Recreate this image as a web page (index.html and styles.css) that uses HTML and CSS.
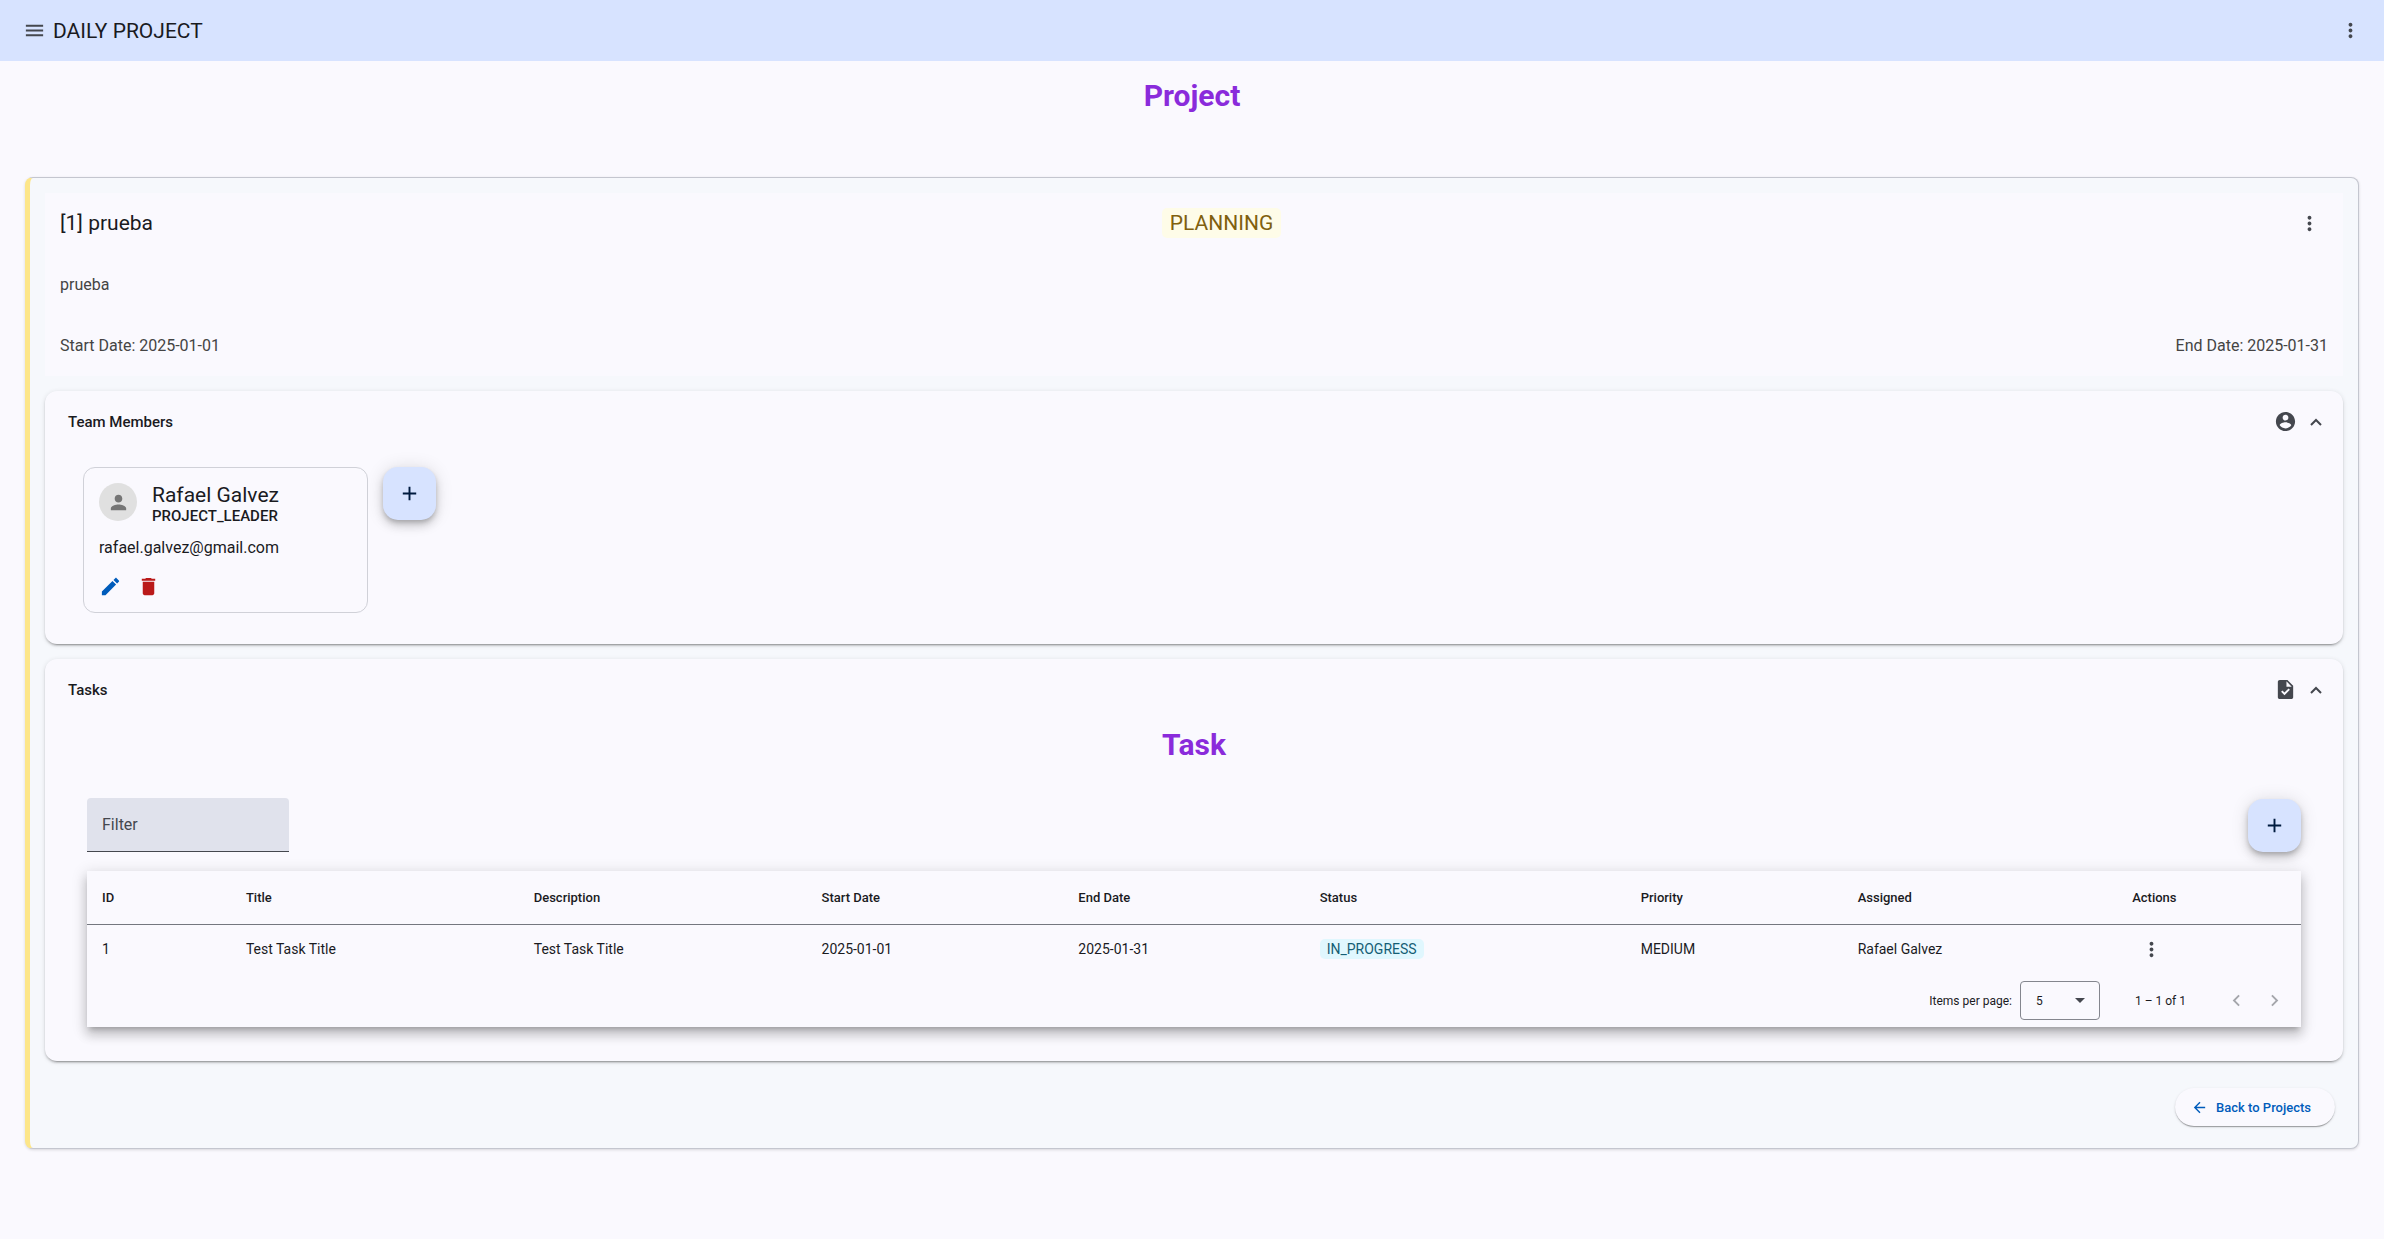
FILE: index.html
```html
<!DOCTYPE html>
<html lang="en">
<head>
<meta charset="utf-8">
<meta name="viewport" content="width=device-width, initial-scale=1">
<title>Daily Project</title>
<link rel="stylesheet" href="styles.css">
</head>
<body>
<header class="toolbar">
  <button class="icon-btn" type="button" aria-label="Menu"><svg class="icon" viewBox="0 0 24 24"><path d="M3 18h18v-2H3v2zm0-5h18v-2H3v2zm0-7v2h18V6H3z"/></svg></button>
  <span class="brand">DAILY PROJECT</span>
  <button class="icon-btn toolbar-more" type="button" aria-label="More options"><svg class="icon" viewBox="0 0 24 24"><path d="M12 8c1.100 0 2-.9 2-2s-.9-2-2-2-2 .9-2 2 .9 2 2 2zm0 2c-1.100 0-2 .9-2 2s.9 2 2 2 2-.9 2-2-.9-2-2-2zm0 6c-1.100 0-2 .9-2 2s.9 2 2 2 2-.9 2-2-.9-2-2-2z"/></svg></button>
</header>
<main class="page">
  <h1 class="heading">Project</h1>
  <article class="project">
    <header class="summary">
      <div class="summary-row">
        <h2 class="project-title">[1] prueba</h2>
        <span class="badge badge-planning">PLANNING</span>
        <button class="icon-btn" type="button" aria-label="Project options"><svg class="icon" viewBox="0 0 24 24"><path d="M12 8c1.100 0 2-.9 2-2s-.9-2-2-2-2 .9-2 2 .9 2 2 2zm0 2c-1.100 0-2 .9-2 2s.9 2 2 2 2-.9 2-2-.9-2-2-2zm0 6c-1.100 0-2 .9-2 2s.9 2 2 2 2-.9 2-2-.9-2-2-2z"/></svg></button>
      </div>
      <p class="description">prueba</p>
      <div class="dates"><span>Start Date: 2025-01-01</span><span>End Date: 2025-01-31</span></div>
    </header>

    <section class="panel">
      <button class="panel-header" type="button" aria-expanded="true">
        <span class="panel-title">Team Members</span>
        <svg class="icon" viewBox="0 0 24 24"><path d="M12 2C6.480 2 2 6.480 2 12s4.480 10 10 10 10-4.480 10-10S17.520 2 12 2zm0 3c1.660 0 3 1.340 3 3s-1.340 3-3 3-3-1.340-3-3 1.340-3 3-3zm0 14.200c-2.500 0-4.710-1.280-6-3.220.03-1.990 4-3.080 6-3.080 1.990 0 5.970 1.090 6 3.080-1.290 1.940-3.500 3.220-6 3.220z"/></svg>
        <svg class="chevron" viewBox="0 0 12 12"><path d="M1 9l5-5 5 5"/></svg>
      </button>
      <div class="team">
        <article class="member">
          <div class="member-head">
            <span class="avatar"><svg class="icon" viewBox="0 0 24 24"><path d="M12 12c2.210 0 4-1.790 4-4s-1.790-4-4-4-4 1.790-4 4 1.790 4 4 4zm0 2c-2.670 0-8 1.340-8 4v2h16v-2c0-2.660-5.330-4-8-4z"/></svg></span>
            <div>
              <h3 class="member-name">Rafael Galvez</h3>
              <p class="member-role">PROJECT_LEADER</p>
            </div>
          </div>
          <p class="member-mail">rafael.galvez@gmail.com</p>
          <div class="member-actions">
            <button class="icon-btn edit" type="button" aria-label="Edit member"><svg class="icon" viewBox="0 0 24 24"><path d="M3 17.250V21h3.750L17.810 9.940l-3.750-3.750L3 17.250zM20.710 7.040c.39-.39.39-1.020 0-1.410l-2.340-2.340c-.39-.39-1.020-.39-1.410 0l-1.830 1.830 3.750 3.750 1.830-1.830z"/></svg></button>
            <button class="icon-btn delete" type="button" aria-label="Remove member"><svg class="icon" viewBox="0 0 24 24"><path d="M6 19c0 1.100.9 2 2 2h8c1.100 0 2-.9 2-2V7H6v12zM19 4h-3.500l-1-1h-5l-1 1H5v2h14V4z"/></svg></button>
          </div>
        </article>
        <button class="fab" type="button" aria-label="Add member"><svg class="icon" viewBox="0 0 24 24"><path d="M19 13h-6v6h-2v-6H5v-2h6V5h2v6h6v2z"/></svg></button>
      </div>
    </section>

    <section class="panel">
      <button class="panel-header" type="button" aria-expanded="true">
        <span class="panel-title">Tasks</span>
        <svg class="icon" viewBox="0 0 24 24"><path d="M14 2H6c-1.100 0-2 .9-2 2v16c0 1.100.89 2 1.990 2H18c1.100 0 2-.9 2-2V8l-6-6zm-3.060 16L7.400 14.460l1.410-1.410 2.120 2.120 4.240-4.240 1.410 1.410L10.940 18zM13 9V3.500L18.500 9H13z"/></svg>
        <svg class="chevron" viewBox="0 0 12 12"><path d="M1 9l5-5 5 5"/></svg>
      </button>
      <div class="tasks">
        <h2 class="heading">Task</h2>
        <div class="tasks-bar">
          <input class="filter" type="text" placeholder="Filter" aria-label="Filter">
          <button class="fab" type="button" aria-label="Add task"><svg class="icon" viewBox="0 0 24 24"><path d="M19 13h-6v6h-2v-6H5v-2h6V5h2v6h6v2z"/></svg></button>
        </div>
        <div class="sheet">
          <table class="task-table">
            <colgroup><col class="c-id"><col class="c-text"><col class="c-text"><col class="c-start"><col class="c-end"><col class="c-status"><col class="c-priority"><col class="c-assigned"><col></colgroup>
            <thead><tr><th>ID</th><th>Title</th><th>Description</th><th>Start Date</th><th>End Date</th><th>Status</th><th>Priority</th><th>Assigned</th><th>Actions</th></tr></thead>
            <tbody><tr><td>1</td><td>Test Task Title</td><td>Test Task Title</td><td>2025-01-01</td><td>2025-01-31</td><td><span class="badge badge-progress">IN_PROGRESS</span></td><td>MEDIUM</td><td>Rafael Galvez</td><td><button class="icon-btn" type="button" aria-label="Task options"><svg class="icon" viewBox="0 0 24 24"><path d="M12 8c1.100 0 2-.9 2-2s-.9-2-2-2-2 .9-2 2 .9 2 2 2zm0 2c-1.100 0-2 .9-2 2s.9 2 2 2 2-.9 2-2-.9-2-2-2zm0 6c-1.100 0-2 .9-2 2s.9 2 2 2 2-.9 2-2-.9-2-2-2z"/></svg></button></td></tr></tbody>
          </table>
          <div class="paginator">
            <label for="page-size">Items per page:</label>
            <span class="page-size">
              <select id="page-size"><option>5</option><option>10</option><option>25</option></select>
              <svg class="caret" viewBox="0 0 10 5"><path d="M0 0h10L5 5z"/></svg>
            </span>
            <span class="range">1 – 1 of 1</span>
            <button class="icon-btn" type="button" disabled aria-label="Previous page"><svg class="icon" viewBox="0 0 24 24"><path d="M15.410 7.410L14 6l-6 6 6 6 1.410-1.410L10.830 12z"/></svg></button>
            <button class="icon-btn" type="button" disabled aria-label="Next page"><svg class="icon" viewBox="0 0 24 24"><path d="M10 6L8.590 7.410 13.170 12l-4.580 4.590L10 18l6-6z"/></svg></button>
          </div>
        </div>
      </div>
    </section>

    <footer class="project-footer">
      <a class="back" href="#projects"><svg class="icon" viewBox="0 0 24 24"><path d="M20 11H7.830l5.590-5.590L12 4l-8 8 8 8 1.410-1.410L7.830 13H20v-2z"/></svg>Back to Projects</a>
    </footer>
  </article>
</main>
</body>
</html>
```
FILE: styles.css
```css
* { box-sizing: border-box; }

body {
  margin: 0;
  background: #faf9fe;
  color: #1a1b1f;
  font-family: Roboto, sans-serif;
  font-size: 13px;
}

h1, h2, h3, p { margin: 0; }

button, input, select { font: inherit; color: inherit; }

button { cursor: pointer; }

.icon {
  display: block;
  flex: none;
  width: 23px;
  height: 23px;
  fill: currentColor;
}

.icon-btn {
  display: flex;
  align-items: center;
  justify-content: center;
  width: 38px;
  height: 38px;
  padding: 0;
  border: 0;
  border-radius: 50%;
  background: none;
  color: #44474e;
}

/* Toolbar */
.toolbar {
  display: flex;
  align-items: center;
  height: 61px;
  padding: 0 15px;
  background: #d7e3ff;
}

.brand { font-size: 21px; line-height: 26px; }

.toolbar-more { margin-left: auto; }

/* Page */
.page { padding: 16px 25px 90px; }

.heading {
  color: #8a2bdb;
  font-size: 30px;
  font-weight: 700;
  line-height: 38px;
  text-align: center;
}

.project {
  margin-top: 62px;
  padding: 15px;
  border: 1px solid #c4c6cf;
  border-left: 5px solid #fde68a;
  border-radius: 8px;
  background: #f6f8fc;
  box-shadow: 0 1px 3px rgba(0, 0, 0, 0.14);
}

.summary {
  padding: 11px 15px 18px;
  background: #faf9fe;
  color: #444444;
  font-size: 16px;
  line-height: 24px;
}

.summary-row, .dates {
  display: flex;
  align-items: center;
  justify-content: space-between;
}

.project-title {
  color: #1a1b1f;
  font-size: 21px;
  font-weight: 400;
}

.description { margin: 31px 0 37px; }

.badge { display: inline-block; border-radius: 5px; }

.badge-planning {
  padding: 2px 8px;
  background: #fefce8;
  color: #80600f;
  font-size: 21px;
  line-height: 26px;
}

.badge-progress {
  padding: 0 7px;
  background: #e0f7fe;
  color: #155e75;
  line-height: 20px;
}

/* Expansion panels */
.panel {
  margin-top: 15px;
  border-radius: 12px;
  background: #faf9fe;
  box-shadow: 0 3px 1px -2px rgba(0, 0, 0, 0.2), 0 2px 2px rgba(0, 0, 0, 0.14), 0 1px 5px rgba(0, 0, 0, 0.12);
}

.panel-header {
  display: flex;
  align-items: center;
  width: 100%;
  height: 61px;
  padding: 0 21px 0 23px;
  border: 0;
  background: none;
  color: #44474e;
  text-align: left;
}

.panel-title {
  flex: 1;
  color: #1a1b1f;
  font-size: 15px;
  font-weight: 500;
}

.chevron {
  width: 12px;
  height: 12px;
  margin-left: 13px;
  fill: none;
  stroke: currentColor;
  stroke-width: 2;
}

/* Team */
.team {
  display: flex;
  align-items: flex-start;
  gap: 15px;
  padding: 15px 38px 31px;
}

.member {
  width: 285px;
  padding: 15px 15px 7px;
  border: 1px solid #d0d1d8;
  border-radius: 12px;
}

.member-head { display: flex; gap: 15px; }

.avatar {
  display: flex;
  align-items: center;
  justify-content: center;
  width: 38px;
  height: 38px;
  border-radius: 50%;
  background: #e0e0e0;
  color: #757575;
}

.member-name {
  font-size: 21px;
  font-weight: 400;
  line-height: 24px;
}

.member-role {
  font-size: 15px;
  font-weight: 500;
  line-height: 18px;
}

.member-mail {
  margin: 12px 0 8px;
  font-size: 16px;
  line-height: 22px;
}

.member-actions { display: flex; margin-left: -8px; }

.edit { color: #005cbb; }

.delete { color: #ba1a1a; }

.fab {
  display: flex;
  align-items: center;
  justify-content: center;
  width: 53px;
  height: 53px;
  padding: 0;
  border: 0;
  border-radius: 15px;
  background: #d7e3ff;
  color: #001b3f;
  box-shadow: 0 3px 5px -1px rgba(0, 0, 0, 0.2), 0 6px 10px rgba(0, 0, 0, 0.14), 0 1px 18px rgba(0, 0, 0, 0.12);
}

/* Tasks */
.tasks { padding: 6px 42px 34px; }

.tasks-bar {
  display: flex;
  align-items: center;
  justify-content: space-between;
  margin: 34px 0 19px;
}

.filter {
  width: 202px;
  height: 54px;
  padding: 0 15px;
  border: 0;
  border-bottom: 1px solid #44474e;
  border-radius: 4px 4px 0 0;
  background: #e0e2ec;
  font-size: 16px;
}

.filter::placeholder { color: #44474e; opacity: 1; }

.sheet {
  background: #faf9fe;
  box-shadow: 0 5px 5px -3px rgba(0, 0, 0, 0.2), 0 8px 10px 1px rgba(0, 0, 0, 0.14), 0 3px 14px 2px rgba(0, 0, 0, 0.12);
}

.task-table {
  width: 100%;
  border-collapse: collapse;
  table-layout: fixed;
}

.task-table th, .task-table td {
  padding: 0 15px;
  text-align: left;
}

.task-table th {
  height: 53px;
  border-bottom: 1px solid #74777f;
  font-weight: 500;
}

.task-table td { height: 50px; font-size: 14px; }

.c-id { width: 6.5%; }
.c-text { width: 13%; }
.c-start { width: 11.6%; }
.c-end { width: 10.9%; }
.c-status { width: 14.5%; }
.c-priority { width: 9.8%; }
.c-assigned { width: 12.4%; }

.paginator {
  display: flex;
  align-items: center;
  justify-content: flex-end;
  height: 53px;
  padding-right: 8px;
  font-size: 12px;
}

.page-size { position: relative; margin: 0 35px 0 8px; }

.page-size select {
  display: block;
  width: 80px;
  height: 39px;
  padding: 0 15px;
  border: 1px solid #84868e;
  border-radius: 4px;
  background: none;
  appearance: none;
}

.caret {
  position: absolute;
  top: 17px;
  right: 15px;
  width: 10px;
  height: 5px;
  fill: #44474e;
  pointer-events: none;
}

.range { margin-right: 31px; }

.icon-btn:disabled { color: #a5a6ac; }

.project-footer {
  display: flex;
  justify-content: flex-end;
  padding: 27px 8px 7px;
}

.back {
  display: flex;
  align-items: center;
  gap: 8px;
  height: 38px;
  padding: 0 24px 0 16px;
  border-radius: 19px;
  background: #faf9fe;
  color: #005cbb;
  font-weight: 500;
  text-decoration: none;
  box-shadow: 0 2px 1px -1px rgba(0, 0, 0, 0.2), 0 1px 1px rgba(0, 0, 0, 0.14), 0 1px 3px rgba(0, 0, 0, 0.12);
}

.back .icon { width: 17px; height: 17px; }
```
